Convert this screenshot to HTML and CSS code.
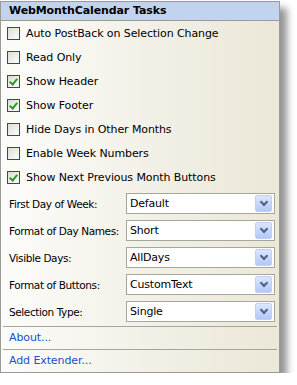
FILE: index.html
```html
<!DOCTYPE html>
<html lang="en">
<head>
    <meta charset="UTF-8">
    <link rel="stylesheet" href="styles.css">
</head>
<body>
    <div class="task-panel">
        <div class="task-header">WebMonthCalendar Tasks</div>

        <div class="check-list">
            <label class="check-row"><span class="check-box"></span>Auto PostBack on Selection Change</label>
            <label class="check-row"><span class="check-box"></span>Read Only</label>
            <label class="check-row"><span class="check-box checked"></span>Show Header</label>
            <label class="check-row"><span class="check-box checked"></span>Show Footer</label>
            <label class="check-row"><span class="check-box"></span>Hide Days in Other Months</label>
            <label class="check-row"><span class="check-box"></span>Enable Week Numbers</label>
            <label class="check-row"><span class="check-box checked"></span>Show Next Previous Month Buttons</label>
        </div>

        <div class="prop-list">
            <div class="prop-row">
                <span class="prop-label">First Day of Week:</span>
                <span class="combo"><span class="combo-text">Default</span><span class="combo-btn"></span></span>
            </div>
            <div class="prop-row">
                <span class="prop-label">Format of Day Names:</span>
                <span class="combo"><span class="combo-text">Short</span><span class="combo-btn"></span></span>
            </div>
            <div class="prop-row">
                <span class="prop-label">Visible Days:</span>
                <span class="combo"><span class="combo-text">AllDays</span><span class="combo-btn"></span></span>
            </div>
            <div class="prop-row">
                <span class="prop-label">Format of Buttons:</span>
                <span class="combo"><span class="combo-text">CustomText</span><span class="combo-btn"></span></span>
            </div>
            <div class="prop-row">
                <span class="prop-label">Selection Type:</span>
                <span class="combo"><span class="combo-text">Single</span><span class="combo-btn"></span></span>
            </div>
        </div>

        <div class="link-row">About...</div>
        <div class="link-row">Add Extender...</div>
    </div>
</body>
</html>
```

FILE: styles.css
```css
body {
    margin: 0;
    padding: 1px 0 0 0;
    background-color: #fff;
    font-family: "DejaVu Sans", Verdana, sans-serif;
    font-size: 11px;
    color: #000;
}

.task-panel {
    width: 278px;
    border: 1px solid #9b9b93;
    background: linear-gradient(to right, #fcfcfa 0%, #f2f0e6 55%, #ebe8d8 100%);
    box-shadow: 7px 7px 7px rgba(0, 0, 0, 0.42);
}

.task-header {
    height: 18px;
    line-height: 18px;
    padding-left: 8px;
    background-color: #c2d3f0;
    border-bottom: 1px solid #9b9b93;
    font-weight: bold;
    letter-spacing: -0.1px;
}

.check-list {
    display: flex;
    flex-direction: column;
}

.check-row {
    height: 24px;
    display: flex;
    align-items: center;
    padding-left: 6px;
    letter-spacing: -0.1px;
    white-space: nowrap;
}

.check-box {
    width: 11px;
    height: 11px;
    border: 1px solid #1c5180;
    background: linear-gradient(135deg, #dcdcd5 0%, #f4f4f0 70%, #fff 100%);
    margin-right: 6px;
    position: relative;
    flex-shrink: 0;
}

.check-box.checked::after {
    content: "";
    position: absolute;
    left: 3px;
    top: 1px;
    width: 3px;
    height: 6px;
    border-right: 2px solid #21a121;
    border-bottom: 2px solid #21a121;
    transform: rotate(40deg);
}

.prop-list {
    display: flex;
    flex-direction: column;
    padding-top: 1px;
    padding-bottom: 1px;
}

.prop-row {
    height: 27px;
    display: flex;
    align-items: center;
    padding-left: 8px;
}

.prop-label {
    width: 117px;
    flex-shrink: 0;
    white-space: nowrap;
    font-size: 10.5px;
    letter-spacing: -0.4px;
}

.combo {
    width: 147px;
    height: 19px;
    border: 1px solid #a5a69c;
    background-color: #fff;
    display: flex;
    align-items: center;
    justify-content: space-between;
}

.combo-text {
    padding-left: 3px;
    letter-spacing: -0.2px;
}

.combo-btn {
    width: 15px;
    height: 15px;
    margin-right: 2px;
    border: 1px solid #c0cff4;
    border-radius: 2px;
    background: linear-gradient(to bottom, #dce6fd 0%, #c3d4fb 60%, #b4c8f6 100%);
    position: relative;
}

.combo-btn::after {
    content: "";
    position: absolute;
    left: 5px;
    top: 3px;
    width: 4px;
    height: 4px;
    border-right: 2px solid #4d6185;
    border-bottom: 2px solid #4d6185;
    transform: rotate(45deg);
}

.link-row {
    height: 22px;
    line-height: 22px;
    margin: 0 2px;
    padding-left: 6px;
    border-top: 1px solid #a6a598;
    color: #1b4fc9;
    letter-spacing: -0.1px;
}
```
